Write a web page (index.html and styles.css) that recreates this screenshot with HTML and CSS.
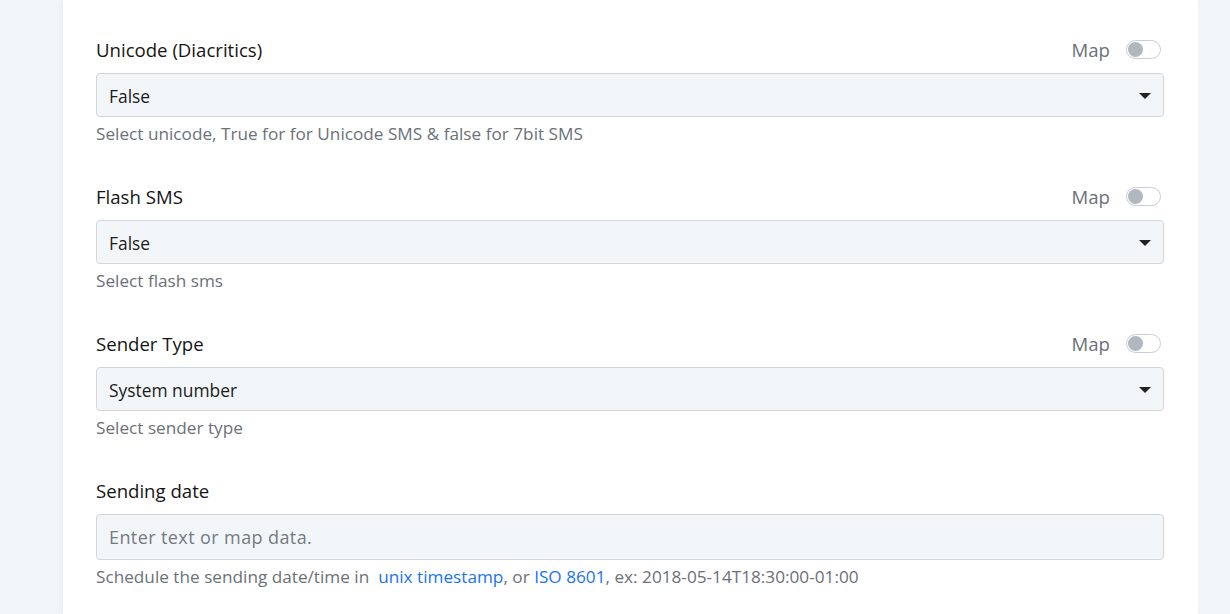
FILE: index.html
```html
<!DOCTYPE html>
<html lang="en">
<head>
  <meta charset="UTF-8" />
  <title>Send SMS</title>
  <link rel="stylesheet" href="styles.css">
</head>
<body>
  <div class="card">

    <div class="field">
      <div class="field-head">
        <label>Unicode (Diacritics)</label>
        <div class="map-toggle">Map <span class="switch"></span></div>
      </div>
      <div class="select-box">False <span class="caret"></span></div>
      <div class="help">Select unicode, True for for Unicode SMS &amp; false for 7bit SMS</div>
    </div>

    <div class="field">
      <div class="field-head">
        <label>Flash SMS</label>
        <div class="map-toggle">Map <span class="switch"></span></div>
      </div>
      <div class="select-box">False <span class="caret"></span></div>
      <div class="help">Select flash sms</div>
    </div>

    <div class="field">
      <div class="field-head">
        <label>Sender Type</label>
        <div class="map-toggle">Map <span class="switch"></span></div>
      </div>
      <div class="select-box">System number <span class="caret"></span></div>
      <div class="help">Select sender type</div>
    </div>

    <div class="field">
      <div class="field-head">
        <label>Sending date</label>
      </div>
      <input class="text-input" type="text" placeholder="Enter text or map data." />
      <div class="help">Schedule the sending date/time in &nbsp;<a href="#">unix timestamp</a>, or <a href="#">ISO 8601</a>, ex: 2018-05-14T18:30:00-01:00</div>
    </div>

  </div>
</body>
</html>
```

FILE: styles.css
```css
body {
  margin: 0;
  background: #f3f6f9;
  font-family: 'Open Sans', sans-serif;
  color: #1b1b1b;
}

.card {
  background: #fff;
  width: 1135px;
  margin-left: 63px;
  padding: 37px 34px 0 33px;
  box-sizing: border-box;
  min-height: 614px;
  box-shadow: -2px 0 4px rgba(0, 0, 0, 0.04);
}

.field {
  margin-bottom: 38px;
}

.field-head {
  display: flex;
  justify-content: space-between;
  align-items: center;
  height: 24px;
  margin-bottom: 12px;
}

.field-head label {
  font-size: 18.6px;
  font-weight: 500;
  color: #151515;
}

.map-toggle {
  display: flex;
  align-items: center;
  gap: 16px;
  font-size: 18.6px;
  color: #6b7079;
  padding-right: 3px;
}

.switch {
  position: relative;
  width: 33px;
  height: 17px;
  border: 1px solid #c9ced4;
  border-radius: 10px;
  background: #fff;
}

.switch::before {
  content: "";
  position: absolute;
  left: 1px;
  top: 1px;
  width: 15px;
  height: 15px;
  border-radius: 50%;
  background: #b1b7be;
}

.select-box {
  position: relative;
  height: 44px;
  box-sizing: border-box;
  border: 1px solid #d2d6db;
  border-radius: 4px;
  background: #f3f6f9;
  padding: 2px 12px 0;
  display: flex;
  align-items: center;
  font-size: 17.4px;
  color: #1b1b1b;
}

.caret {
  position: absolute;
  right: 12px;
  top: 19px;
  width: 0;
  height: 0;
  border-left: 6px solid transparent;
  border-right: 6px solid transparent;
  border-top: 6px solid #222;
}

.text-input {
  display: block;
  width: 100%;
  height: 46px;
  box-sizing: border-box;
  border: 1px solid #d2d6db;
  border-radius: 4px;
  background: #f3f6f9;
  padding: 0 12px;
  font-family: 'Open Sans', sans-serif;
  font-size: 18px;
  letter-spacing: 0.4px;
  outline: none;
}

.text-input::placeholder {
  color: #757a82;
}

.help {
  margin-top: 5px;
  font-size: 17.2px;
  line-height: 24px;
  color: #6b7079;
}

.help a {
  color: #1a73f0;
  text-decoration: none;
}
```
